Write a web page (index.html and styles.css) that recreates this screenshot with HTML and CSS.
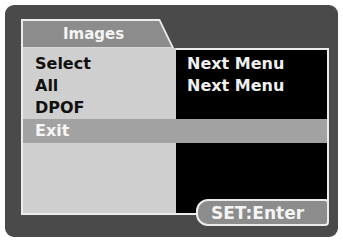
FILE: index.html
```html
<!DOCTYPE html>
<html>
<head>
<meta charset="utf-8">
<link rel="stylesheet" href="styles.css">
</head>
<body>
<div class="frame">
  <div class="tabrow">
    <div class="tabwrap"><div class="tab">Images</div></div>
  </div>
  <div class="panels">
    <div class="row top"><div class="l"></div><div class="r"></div></div>
    <div class="row"><div class="l">Select</div><div class="r">Next Menu</div></div>
    <div class="row"><div class="l">All</div><div class="r">Next Menu</div></div>
    <div class="row"><div class="l">DPOF</div><div class="r"></div></div>
    <div class="row sel"><div class="l">Exit</div><div class="r"></div></div>
    <div class="row fill"><div class="l"></div><div class="r"></div></div>
    <div class="pill">SET:Enter</div>
  </div>
</div>
</body>
</html>
```

FILE: styles.css
```css
html, body {
  margin: 0;
  padding: 0;
  background: #ffffff;
}
body {
  font-family: "DejaVu Sans", "Liberation Sans", sans-serif;
  font-weight: bold;
}
.frame {
  margin: 5px;
  width: 333px;
  height: 232px;
  box-sizing: border-box;
  padding: 14px 9px 0 16px;
  background: #4a4a4a;
  border-radius: 9px;
}
.tabrow {
  height: 29px;
  display: flex;
}
.tabwrap {
  width: 153px;
  height: 29px;
  background: #ececec;
  clip-path: polygon(0 0, 139px 0, 153px 100%, 0 100%);
}
.tab {
  margin: 2px 0 0 2px;
  height: 26px;
  border-bottom: 1px solid #d8d8d8;
  background: #8c8c8c;
  clip-path: polygon(0 0, 136px 0, 149px 100%, 0 100%);
  color: #f4f4f4;
  font-size: 15px;
  line-height: 27px;
  padding-left: 40px;
}
.panels {
  position: relative;
  height: 167px;
  box-sizing: border-box;
  border-left: 2px solid #ececec;
  border-right: 2px solid #ececec;
  border-bottom: 2px solid #ececec;
  display: flex;
  flex-direction: column;
}
.row {
  display: grid;
  grid-template-columns: 153px 1fr;
  height: 22px;
  font-size: 16px;
  line-height: 22px;
}
.l {
  background: #cfcfcf;
  color: #111111;
  padding-left: 12px;
}
.r {
  background: #000000;
  color: #f0f0f0;
  padding-left: 11px;
}
.row.top {
  height: 5px;
}
.row.top .r {
  border-top: 2px solid #ececec;
}
.row.sel {
  height: 24px;
  line-height: 24px;
}
.row.sel .l,
.row.sel .r {
  background: #a2a2a2;
  color: #f6f6f6;
}
.row.fill {
  flex: 1;
}
.pill {
  position: absolute;
  right: -2px;
  bottom: -13px;
  width: 133px;
  height: 27px;
  box-sizing: border-box;
  border: 2px solid #ececec;
  border-radius: 12px 4px 4px 12px;
  background: #8c8c8c;
  color: #f4f4f4;
  font-size: 17px;
  line-height: 21px;
  padding: 2px 0 0 13px;
}
```
